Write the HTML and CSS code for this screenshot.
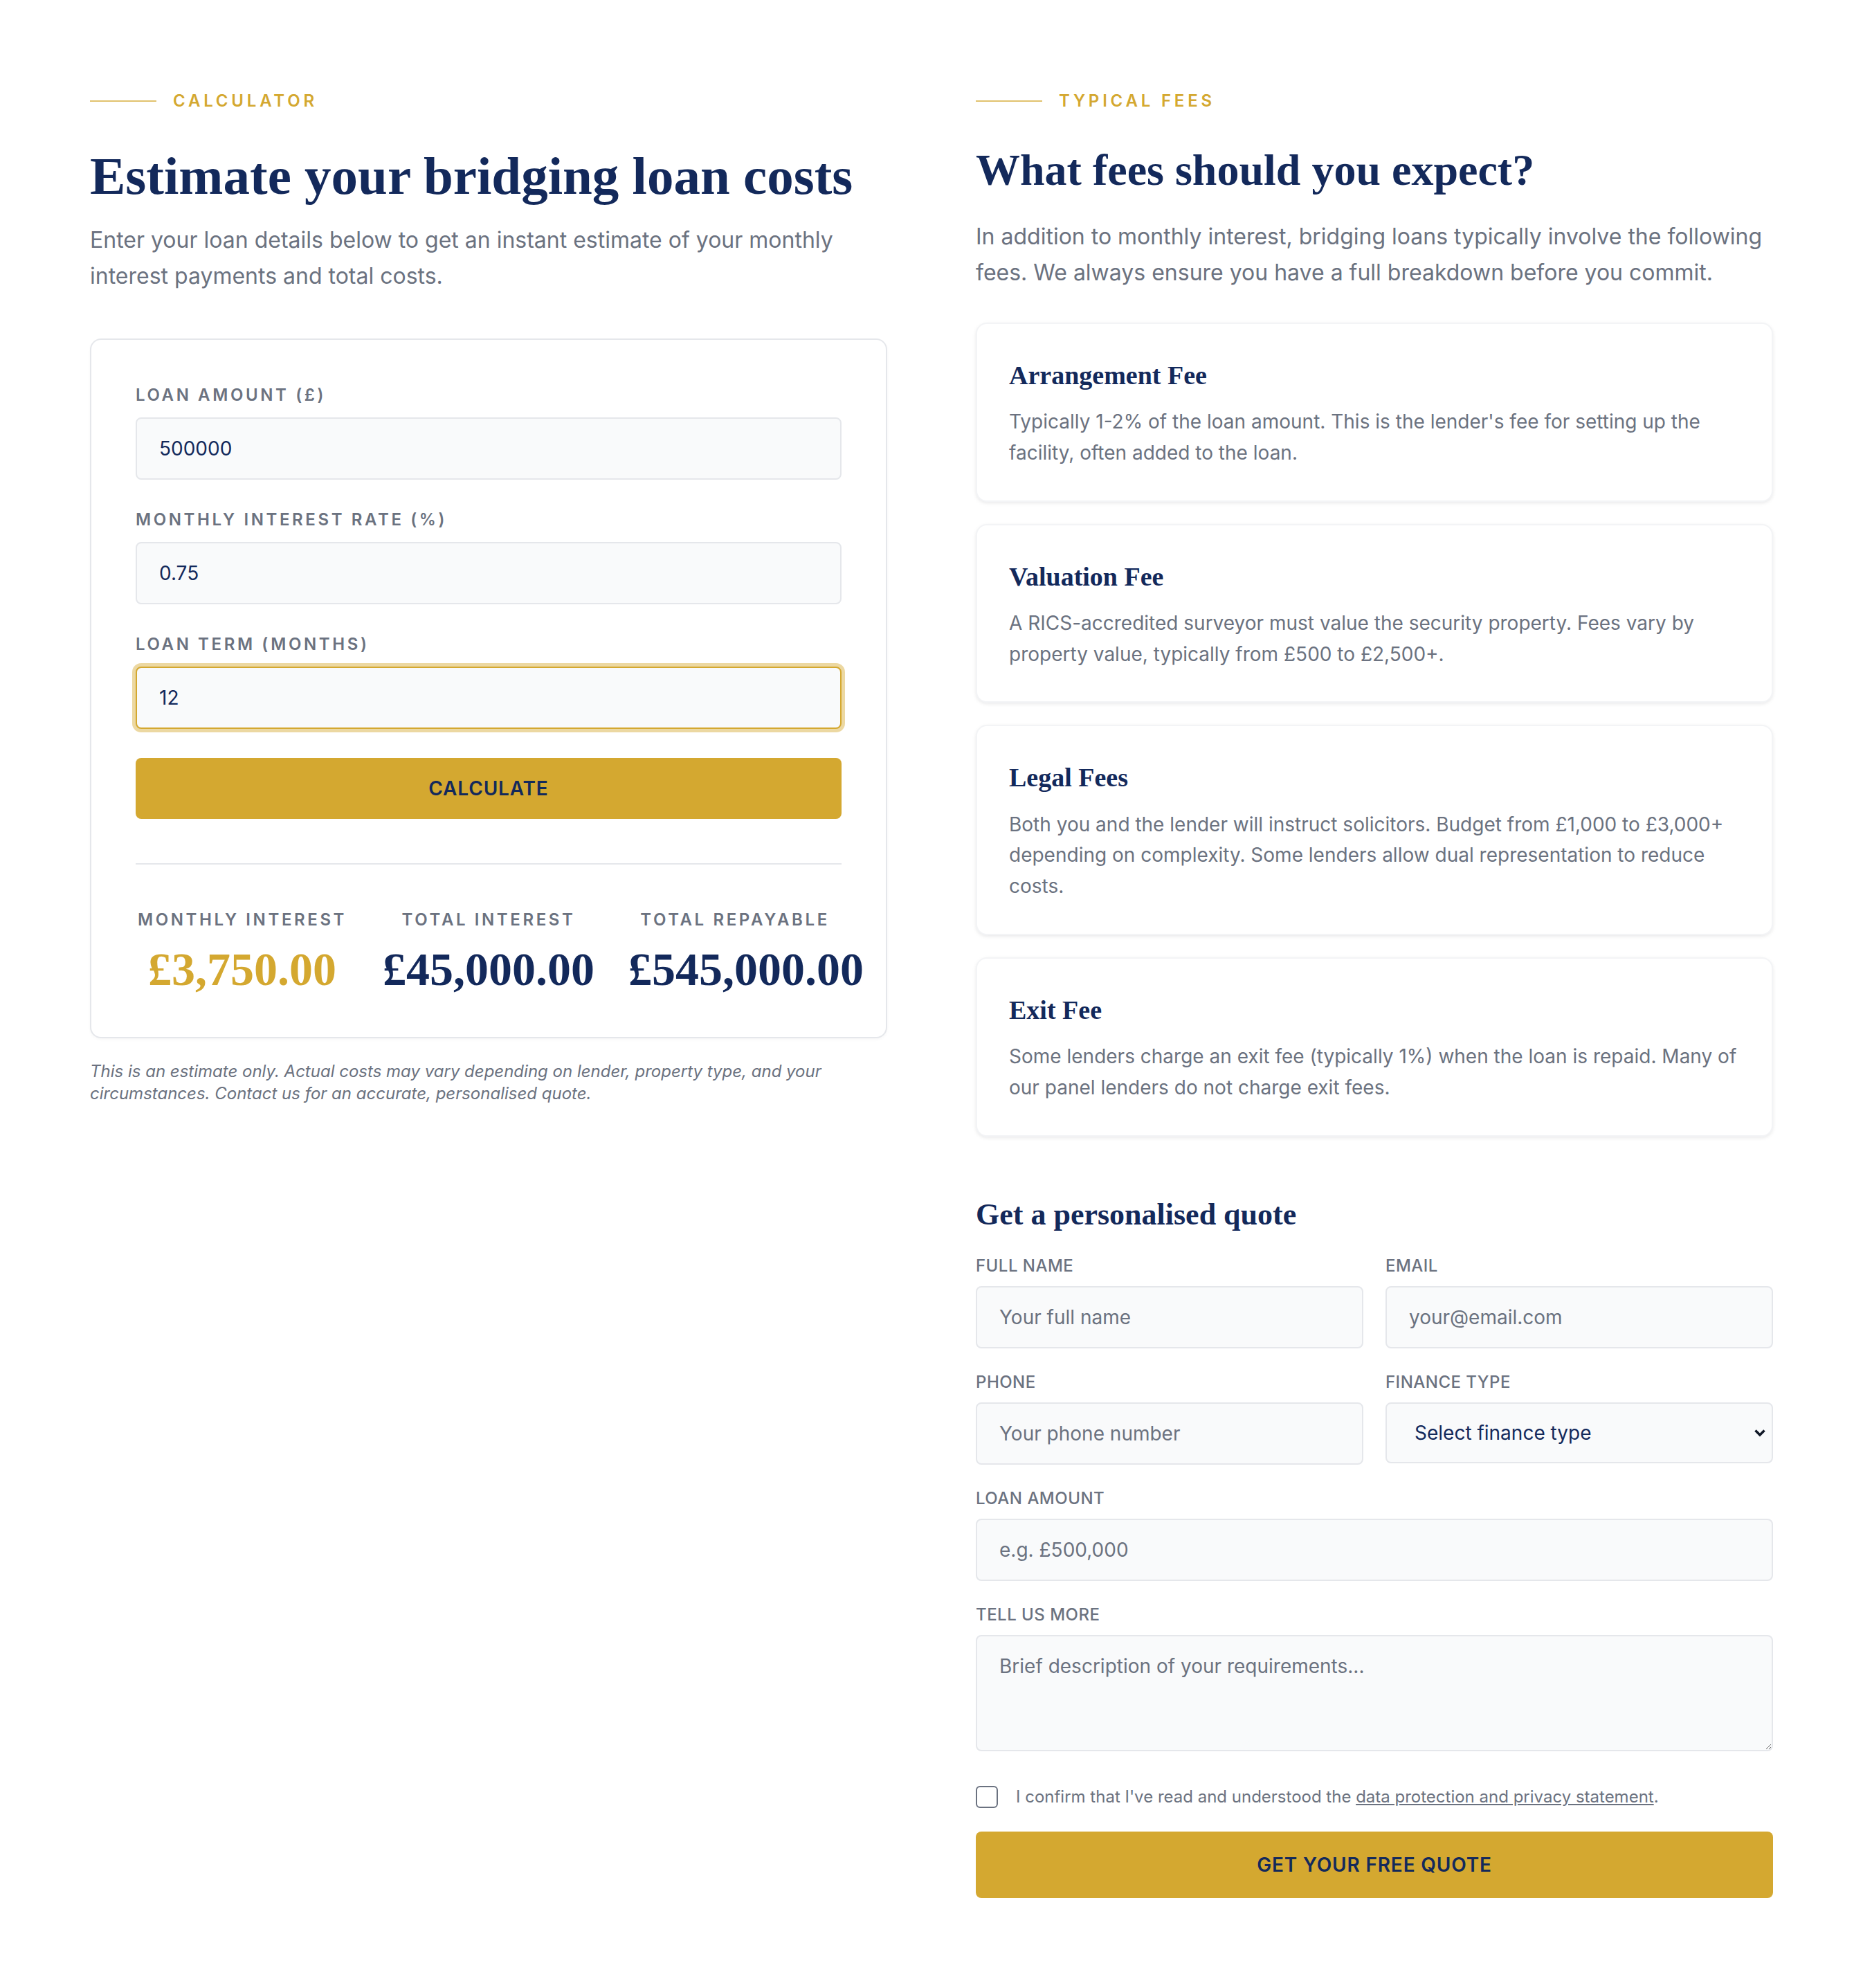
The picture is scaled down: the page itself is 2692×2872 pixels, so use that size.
FILE: index.html
```html
<!DOCTYPE html>
<html lang="en">
<head>
    <meta charset="UTF-8">
    <meta name="viewport" content="width=device-width, initial-scale=1.0">
    <title>Bridging Loan Calculator</title>
    <link rel="stylesheet" href="styles.css">
</head>
<body>
    <div class="page">
        <!-- calculator column -->
        <section class="col">
            <div class="eyebrow"><span class="eyebrow-line"></span>Calculator</div>
            <h2 class="title calc-title">Estimate your bridging loan costs</h2>
            <p class="lead calc-lead">Enter your loan details below to get an instant estimate of your monthly interest payments and total costs.</p>

            <div class="calc-card">
                <div class="calc-field">
                    <label class="calc-label" for="loanAmount">Loan Amount (£)</label>
                    <input class="field-input" type="text" id="loanAmount" value="500000">
                </div>
                <div class="calc-field">
                    <label class="calc-label" for="interestRate">Monthly Interest Rate (%)</label>
                    <input class="field-input" type="text" id="interestRate" value="0.75">
                </div>
                <div class="calc-field">
                    <label class="calc-label" for="loanTerm">Loan Term (Months)</label>
                    <input class="field-input is-focused" type="text" id="loanTerm" value="12">
                </div>
                <button class="btn btn-calc" onclick="calculate()">Calculate</button>

                <div class="results">
                    <div class="result">
                        <div class="result-label">Monthly Interest</div>
                        <div class="result-value gold" id="monthlyInterest">£3,750.00</div>
                    </div>
                    <div class="result">
                        <div class="result-label">Total Interest</div>
                        <div class="result-value" id="totalInterest">£45,000.00</div>
                    </div>
                    <div class="result">
                        <div class="result-label">Total Repayable</div>
                        <div class="result-value" id="totalRepayable">£545,000.00</div>
                    </div>
                </div>
            </div>

            <p class="disclaimer">This is an estimate only. Actual costs may vary depending on lender, property type, and your circumstances. Contact us for an accurate, personalised quote.</p>
        </section>

        <!-- fees column -->
        <section class="col">
            <div class="eyebrow"><span class="eyebrow-line"></span>Typical Fees</div>
            <h2 class="title fees-title">What fees should you expect?</h2>
            <p class="lead fees-lead">In addition to monthly interest, bridging loans typically involve the following fees. We always ensure you have a full breakdown before you commit.</p>

            <div class="fee-list">
                <div class="fee-card">
                    <h3 class="fee-name">Arrangement Fee</h3>
                    <p class="fee-text">Typically 1-2% of the loan amount. This is the lender's fee for setting up the facility, often added to the loan.</p>
                </div>
                <div class="fee-card">
                    <h3 class="fee-name">Valuation Fee</h3>
                    <p class="fee-text">A RICS-accredited surveyor must value the security property. Fees vary by property value, typically from £500 to £2,500+.</p>
                </div>
                <div class="fee-card">
                    <h3 class="fee-name">Legal Fees</h3>
                    <p class="fee-text">Both you and the lender will instruct solicitors. Budget from £1,000 to £3,000+ depending on complexity. Some lenders allow dual representation to reduce costs.</p>
                </div>
                <div class="fee-card">
                    <h3 class="fee-name">Exit Fee</h3>
                    <p class="fee-text">Some lenders charge an exit fee (typically 1%) when the loan is repaid. Many of our panel lenders do not charge exit fees.</p>
                </div>
            </div>

            <form class="quote" onsubmit="return false;">
                <h3 class="title quote-title">Get a personalised quote</h3>
                <div class="quote-row">
                    <div class="quote-field">
                        <label class="quote-label" for="fullName">Full Name</label>
                        <input class="field-input" type="text" id="fullName" placeholder="Your full name">
                    </div>
                    <div class="quote-field">
                        <label class="quote-label" for="email">Email</label>
                        <input class="field-input" type="email" id="email" placeholder="your@email.com">
                    </div>
                </div>
                <div class="quote-row">
                    <div class="quote-field">
                        <label class="quote-label" for="phone">Phone</label>
                        <input class="field-input" type="tel" id="phone" placeholder="Your phone number">
                    </div>
                    <div class="quote-field">
                        <label class="quote-label" for="financeType">Finance Type</label>
                        <div class="select-wrap">
                            <select class="field-input field-select" id="financeType">
                                <option>Select finance type</option>
                                <option>Bridging Loan</option>
                                <option>Development Finance</option>
                                <option>Commercial Mortgage</option>
                                <option>Buy to Let</option>
                            </select>
                            <svg class="select-arrow" viewBox="0 0 18 12" aria-hidden="true">
                                <path d="M2.5 2.5L9 9l6.5-6.5" fill="none" stroke="#111827" stroke-width="3.5"/>
                            </svg>
                        </div>
                    </div>
                </div>
                <div class="quote-field">
                    <label class="quote-label" for="quoteAmount">Loan Amount</label>
                    <input class="field-input" type="text" id="quoteAmount" placeholder="e.g. £500,000">
                </div>
                <div class="quote-field">
                    <label class="quote-label" for="details">Tell Us More</label>
                    <textarea class="field-input field-area" id="details" placeholder="Brief description of your requirements..."></textarea>
                </div>
                <label class="consent">
                    <input type="checkbox">
                    <span>I confirm that I've read and understood the <a href="#">data protection and privacy statement</a>.</span>
                </label>
                <button class="btn btn-quote" type="submit">Get Your Free Quote</button>
            </form>
        </section>
    </div>

    <script>
        function money(n) {
            return '£' + n.toLocaleString('en-GB', { minimumFractionDigits: 2, maximumFractionDigits: 2 });
        }

        function calculate() {
            const amount = parseFloat(document.getElementById('loanAmount').value) || 0;
            const rate = parseFloat(document.getElementById('interestRate').value) || 0;
            const term = parseFloat(document.getElementById('loanTerm').value) || 0;
            const monthly = amount * rate / 100;
            document.getElementById('monthlyInterest').textContent = money(monthly);
            document.getElementById('totalInterest').textContent = money(monthly * term);
            document.getElementById('totalRepayable').textContent = money(amount + monthly * term);
        }
    </script>
</body>
</html>
```

FILE: styles.css
```css
* {
    box-sizing: border-box;
}
body {
    margin: 0;
    background: #fff;
    color: #13295b;
    font-family: Inter, "Noto Sans", sans-serif;
}
.page {
    max-width: 2560px;
    margin: 0 auto;
    padding: 128px 64px;
    display: grid;
    grid-template-columns: 1fr 1fr;
    gap: 128px;
    align-items: start;
}
.col {
    min-width: 0;
}

/* section headers */
.eyebrow {
    display: flex;
    align-items: center;
    gap: 24px;
    margin-bottom: 44px;
    font-size: 24px;
    line-height: 36px;
    font-weight: 600;
    letter-spacing: 0.2em;
    text-transform: uppercase;
    color: #d4a830;
}
.eyebrow-line {
    width: 96px;
    height: 2px;
    background: #d4a830;
    opacity: 0.7;
}
.title {
    margin: 0;
    font-family: "Liberation Serif", "Times New Roman", serif;
    font-weight: 700;
    line-height: 1.2;
    color: #13295b;
}
.calc-title {
    font-size: 77px;
    margin-bottom: 21px;
}
.fees-title {
    font-size: 64px;
    margin: 2px 0 31px;
}
.lead {
    margin: 0;
    font-size: 32px;
    line-height: 52px;
    color: #6b7280;
}
.calc-lead {
    margin-bottom: 64px;
}
.fees-lead {
    margin-bottom: 46px;
}

/* calculator */
.calc-card {
    background: #fff;
    border: 2px solid #e5e7eb;
    border-radius: 16px;
    padding: 64px;
    box-shadow: 0 2px 4px rgba(17, 24, 39, 0.03);
}
.calc-field {
    margin-bottom: 42px;
}
.calc-label {
    display: block;
    margin-bottom: 16px;
    font-size: 24px;
    line-height: 32px;
    font-weight: 600;
    letter-spacing: 0.15em;
    text-transform: uppercase;
    color: #6b7280;
}
.field-input {
    display: block;
    width: 100%;
    height: 90px;
    padding: 0 32px;
    font-family: inherit;
    font-size: 28px;
    color: #13295b;
    background: #f9fafb;
    border: 2px solid #e5e7eb;
    border-radius: 8px;
    outline: none;
}
.field-input::placeholder {
    color: #6b7280;
}
.field-input.is-focused {
    border-color: #d4a830;
    box-shadow: 0 0 0 5px rgba(212, 168, 48, 0.45);
}
.btn {
    display: block;
    width: 100%;
    border: 0;
    border-radius: 8px;
    background: #d4a830;
    color: #13295b;
    font-family: inherit;
    font-size: 28px;
    font-weight: 600;
    letter-spacing: 0.03em;
    text-transform: uppercase;
    cursor: pointer;
}
.btn-calc {
    height: 88px;
}
.results {
    margin-top: 64px;
    padding-top: 64px;
    border-top: 2px solid #e5e7eb;
    display: grid;
    grid-template-columns: repeat(3, minmax(0, 1fr));
    gap: 48px;
    text-align: center;
}
.result-label {
    font-size: 24px;
    line-height: 32px;
    font-weight: 600;
    letter-spacing: 0.15em;
    text-transform: uppercase;
    color: #6b7280;
}
.result-value {
    margin-top: 21px;
    font-family: "Liberation Serif", "Times New Roman", serif;
    font-size: 68px;
    font-weight: 700;
    line-height: 1;
    white-space: nowrap;
    color: #13295b;
}
.result-value.gold {
    color: #d4a830;
}
.disclaimer {
    margin: 32px 0 0;
    font-size: 24px;
    line-height: 1.3;
    font-style: italic;
    color: #6b7280;
}

/* fee cards */
.fee-list {
    display: flex;
    flex-direction: column;
    gap: 32px;
}
.fee-card {
    background: #fff;
    border: 2px solid #f3f4f6;
    border-radius: 16px;
    padding: 48px 36px 46px 46px;
    box-shadow: 0 2px 6px rgba(17, 24, 39, 0.06), 0 2px 4px rgba(17, 24, 39, 0.03);
}
.fee-name {
    margin: 0 0 18px;
    font-family: "Liberation Serif", "Times New Roman", serif;
    font-size: 38px;
    font-weight: 700;
    line-height: 1.4;
    color: #13295b;
}
.fee-text {
    margin: 0;
    font-size: 28px;
    line-height: 1.6;
    color: #6b7280;
}

/* quote form */
.quote {
    margin-top: 84px;
}
.quote-title {
    font-size: 44px;
    line-height: 1.3;
    margin-bottom: 30px;
}
.quote-row {
    display: grid;
    grid-template-columns: 1fr 1fr;
    gap: 32px;
}
.quote-field {
    margin-bottom: 33px;
}
.quote-label {
    display: block;
    margin-bottom: 13px;
    font-size: 24px;
    line-height: 32px;
    font-weight: 500;
    letter-spacing: 0.02em;
    text-transform: uppercase;
    color: #6b7280;
}
.select-wrap {
    position: relative;
}
.field-select {
    appearance: none;
    -webkit-appearance: none;
    height: 88px;
    padding-left: 40px;
}
.select-arrow {
    position: absolute;
    right: 10px;
    top: 50%;
    width: 18px;
    height: 12px;
    margin-top: -6px;
    pointer-events: none;
}
.field-area {
    height: 168px;
    padding: 24px 32px;
    line-height: 38px;
    resize: vertical;
}
.consent {
    display: flex;
    align-items: center;
    gap: 26px;
    margin: 46px 0 30px;
    font-size: 24px;
    line-height: 40px;
    color: #6b7280;
}
.consent input {
    appearance: none;
    -webkit-appearance: none;
    flex: none;
    width: 32px;
    height: 32px;
    margin: 0;
    background: #fff;
    border: 2px solid #6b7280;
    border-radius: 6px;
}
.consent a {
    color: inherit;
    text-decoration: underline;
}
.btn-quote {
    height: 96px;
}
```
